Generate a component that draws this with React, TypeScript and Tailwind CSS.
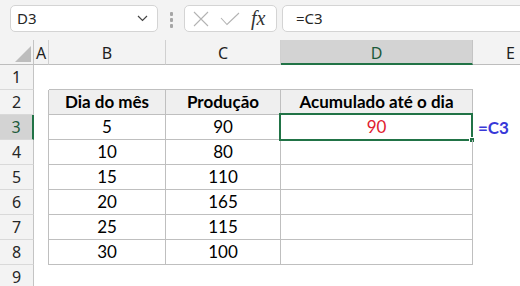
const rows: [string, string][] = [
  ["5", "90"],
  ["10", "80"],
  ["15", "110"],
  ["20", "165"],
  ["25", "115"],
  ["30", "100"],
];

const ui = "font-['Noto_Sans','Open_Sans',sans-serif]";
const cell = "font-['Lato','Liberation_Sans',sans-serif]";

function RowHead({ n, active }: { n: number; active?: boolean }) {
  return (
    <div
      className={
        "w-[34px] h-[25px] shrink-0 flex items-center justify-center text-[16px] border-b border-[#d9d9d9] " +
        ui +
        (active
          ? " bg-[#d3d3d3] border-r-2 border-r-[#217346] text-[#1c5a3a]"
          : " bg-[#f3f3f3] border-r border-r-[#c4c4c4] text-[#262626]")
      }
    >
      {n}
    </div>
  );
}

function ColHead({ w, label, active }: { w: string; label: string; active?: boolean }) {
  return (
    <div
      className={
        w +
        " h-[25px] shrink-0 flex items-center justify-center text-[16px] pt-[2px] " +
        ui +
        (active
          ? " bg-[#d3d3d3] border-b-2 border-b-[#217346] border-r border-r-[#c4c4c4] text-[#1c5a3a]"
          : " border-b border-b-[#bdbdbd] border-r border-r-[#d0d0d0] text-[#1f1f1f]")
      }
    >
      {label}
    </div>
  );
}

export default function App() {
  return (
    <div className="w-[520px] h-[286px] overflow-hidden bg-white">
      {/* formula bar */}
      <div className="h-[40px] bg-[#f3f3f3] flex items-start pt-[5px] pl-[10px]">
        <div className="w-[148px] h-[27px] shrink-0 rounded-[5px] border border-[#d4d4d4] bg-white flex items-center justify-between pl-[6px] pr-[9px]">
          <span className={"text-[15px] text-[#262626] " + ui}>D3</span>
          <svg width="11" height="7" viewBox="0 0 11 7">
            <polyline points="1,1 5.5,5.5 10,1" fill="none" stroke="#444" strokeWidth="1.2" />
          </svg>
        </div>
        <div className="w-[26px] shrink-0 flex flex-col items-center gap-[2px] pt-[7px]">
          <span className="w-[3px] h-[4px] rounded-[1px] bg-[#a6a6a6]" />
          <span className="w-[3px] h-[4px] rounded-[1px] bg-[#a6a6a6]" />
          <span className="w-[3px] h-[4px] rounded-[1px] bg-[#a6a6a6]" />
        </div>
        <div className="w-[93px] h-[27px] shrink-0 rounded-[5px] border border-[#d4d4d4] bg-white flex items-center pl-[8px] gap-[11px]">
          <svg width="16" height="16" viewBox="0 0 16 16">
            <path d="M1 1 L15 15 M15 1 L1 15" stroke="#b3b3b3" strokeWidth="1.1" />
          </svg>
          <svg width="20" height="14" viewBox="0 0 20 14">
            <polyline points="1,6 7,12.5 19,1" fill="none" stroke="#b3b3b3" strokeWidth="1.1" />
          </svg>
          <span className="font-['Liberation_Serif',serif] italic text-[20px] text-[#333] leading-none -mt-[2px]">
            fx
          </span>
        </div>
        <div className="flex-1 h-[27px] ml-[5px] -mr-[8px] rounded-[5px] border border-[#d4d4d4] bg-white flex items-center pl-[13px]">
          <span className={"text-[15px] text-[#262626] " + ui}>=C3</span>
        </div>
      </div>

      {/* column headers */}
      <div className="flex bg-[#f3f3f3]">
        <div className="w-[34px] h-[25px] shrink-0 border-b border-b-[#bdbdbd] border-r border-r-[#c4c4c4] flex items-end justify-end pr-[2px] pb-[2px]">
          <svg width="16" height="16" viewBox="0 0 16 16">
            <polygon points="16,0 16,16 0,16" fill="#bdbdbd" />
          </svg>
        </div>
        <ColHead w="w-[15px]" label="A" />
        <ColHead w="w-[117px]" label="B" />
        <ColHead w="w-[115px]" label="C" />
        <ColHead w="w-[192px]" label="D" active />
        <div className={"flex-1 h-[25px] border-b border-b-[#bdbdbd] flex items-center pl-[33px] pt-[2px] text-[16px] text-[#1f1f1f] " + ui}>
          E
        </div>
      </div>

      {/* row 1 */}
      <div className="flex">
        <RowHead n={1} />
        <div className="w-[15px] shrink-0" />
        <div className="w-[117px] shrink-0 h-[25px] border-b border-[#bfbfbf]" />
        <div className="w-[115px] shrink-0 h-[25px] border-b border-[#bfbfbf]" />
        <div className="w-[192px] shrink-0 h-[25px] border-b border-[#bfbfbf]" />
      </div>

      {/* row 2 table header */}
      <div className="flex">
        <RowHead n={2} />
        <div className="w-[15px] shrink-0 border-r border-[#bfbfbf]" />
        {["Dia do mês", "Produção", "Acumulado até o dia"].map((t, i) => (
          <div
            key={t}
            className={
              (i === 0 ? "w-[117px]" : i === 1 ? "w-[115px]" : "w-[192px]") +
              " shrink-0 h-[25px] bg-[#efefef] border-r border-b border-[#bfbfbf] flex items-center justify-center font-bold text-[17px] text-black " +
              cell
            }
          >
            {t}
          </div>
        ))}
      </div>

      {/* data rows */}
      {rows.map(([d, p], i) => (
        <div key={d} className="flex">
          <RowHead n={i + 3} active={i === 0} />
          <div className="w-[15px] shrink-0 border-r border-[#bfbfbf]" />
          <div className={"w-[117px] shrink-0 h-[25px] border-r border-b border-[#bfbfbf] flex items-center justify-center text-[17px] text-black " + cell}>
            {d}
          </div>
          <div className={"w-[115px] shrink-0 h-[25px] border-r border-b border-[#bfbfbf] flex items-center justify-center text-[17px] text-black " + cell}>
            {p}
          </div>
          <div className={"relative w-[192px] shrink-0 h-[25px] border-r border-b border-[#bfbfbf] flex items-center justify-center text-[17px] text-[#e0202e] " + cell}>
            {i === 0 ? "90" : ""}
            {i === 0 && (
              <div className="absolute -left-[2px] -top-[2px] w-[194px] h-[28px] border-2 border-[#217346]">
                <div className="absolute -right-[4px] -bottom-[4px] w-[6px] h-[6px] bg-[#217346] border border-white" />
              </div>
            )}
          </div>
          {i === 0 && (
            <div className={"h-[25px] flex items-center pl-[5px] font-bold text-[17px] text-[#3838d8] " + cell}>=C3</div>
          )}
        </div>
      ))}

      {/* row 9 */}
      <div className="flex">
        <RowHead n={9} />
      </div>
    </div>
  );
}
